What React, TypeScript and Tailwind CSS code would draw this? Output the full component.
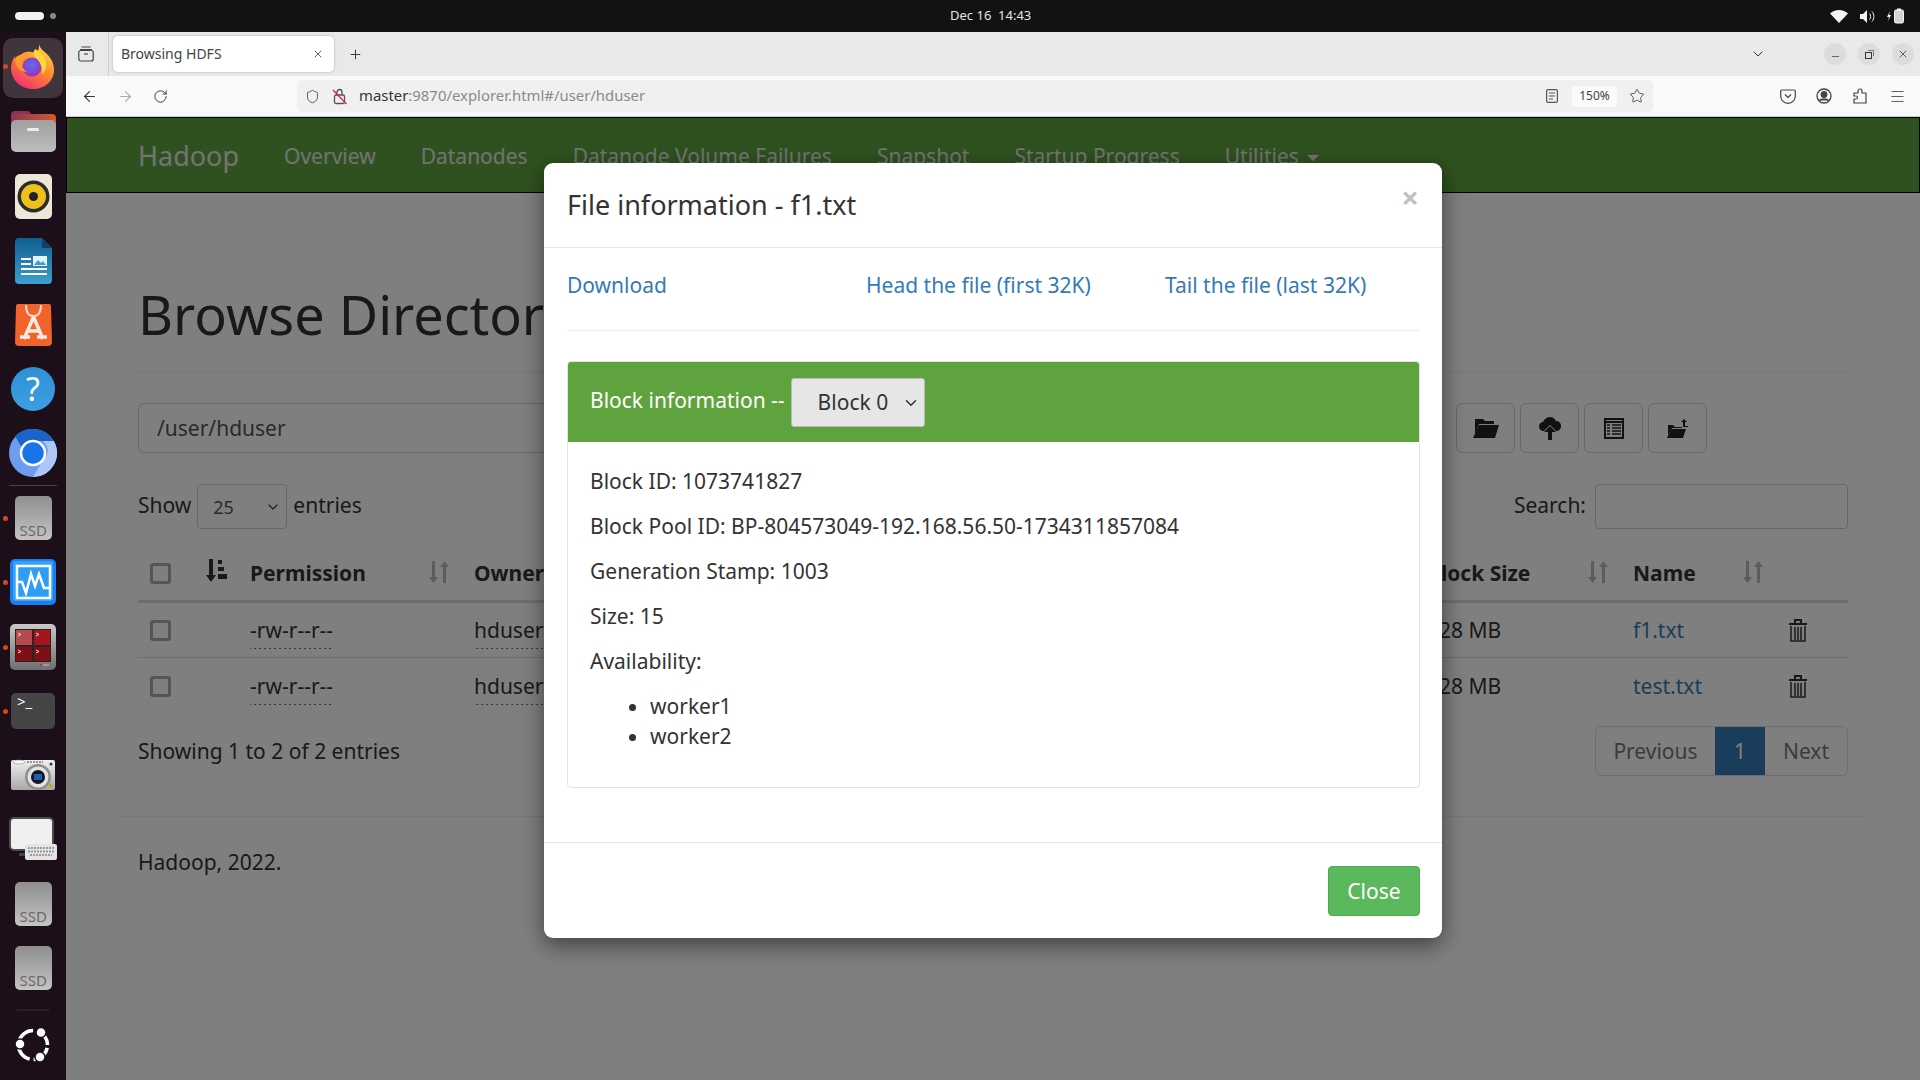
import { ArrowLeft, ArrowRight, ChevronDown, Menu, Minus, Plus, RotateCw, Shield, Star, X } from "lucide-react";

const fontFamily = "font-['Noto_Sans','Open_Sans',sans-serif]";

function SsdIcon() {
  return (
    <div className="relative h-[44px] w-[37px] overflow-hidden rounded-[5px] bg-gradient-to-b from-[#8f8f8f] to-[#c4c4c4]">
      <span className="absolute bottom-[1px] left-[5px] text-[15px] leading-[18px] text-[#6b6b6b]">SSD</span>
    </div>
  );
}

function FirefoxIcon() {
  return (
    <svg width="44" height="46" viewBox="0 0 44 46" className="mb-[4px]">
      <defs>
        <linearGradient id="ffA" x1="0.8" y1="0" x2="0.2" y2="1">
          <stop offset="0" stopColor="#ffe14a" />
          <stop offset="0.45" stopColor="#ff8a2a" />
          <stop offset="1" stopColor="#f0297a" />
        </linearGradient>
        <radialGradient id="ffB" cx="0.5" cy="0.4" r="0.6">
          <stop offset="0" stopColor="#5b6df0" />
          <stop offset="1" stopColor="#9a2fc0" />
        </radialGradient>
      </defs>
      <path d="M28 1c1 5 4 6 8 10 5 5 7 11 7 16 0 11-9 19-21 19S0 37 0 25c0-5 2-9 4-12 0 2 1 4 2 5 1-4 4-8 9-9 4-1 8 1 11 0 2-2 2-5 2-8z" fill="url(#ffA)" />
      <circle cx="21" cy="24" r="9.5" fill="url(#ffB)" />
      <path d="M5 14c3-2 6-3 10-2l6 3c-5-1-9 1-10 4-1 4 1 8 6 10-6 0-11-3-12-8-1-3-1-5 0-7z" fill="#ff9a2e" />
      <path d="M24 6c4 2 10 6 11 14 1 5-1 9-4 12 1-6-1-13-7-18-2-2-2-5 0-8z" fill="#ffd53f" />
    </svg>
  );
}

function FilesIcon() {
  return (
    <div className="relative h-[41px] w-[45px]">
      <div className="absolute left-0 top-0 h-[14px] w-[20px] rounded-t-[4px] bg-[#8a3352]" />
      <div className="absolute left-0 right-0 top-[3px] h-[16px] rounded-t-[4px] bg-gradient-to-r from-[#8a3352] to-[#d25c1f]" />
      <div className="absolute inset-x-0 bottom-0 top-[9px] rounded-[5px] bg-gradient-to-b from-[#a0a0a0] to-[#bdbdbd]" />
      <div className="absolute left-[16px] top-[17px] h-[3px] w-[12px] rounded-sm bg-[#eee]" />
    </div>
  );
}

function RhythmboxIcon() {
  return (
    <svg width="37" height="45" viewBox="0 0 37 45">
      <rect width="37" height="45" rx="5" fill="#ece7d8" />
      <circle cx="18.5" cy="22.5" r="16" fill="#2b2b2b" />
      <circle cx="18.5" cy="22.5" r="12.5" fill="#eec11a" />
      <circle cx="18.5" cy="22.5" r="4.5" fill="#222" />
    </svg>
  );
}

function WriterIcon() {
  return (
    <svg width="37" height="46" viewBox="0 0 37 46">
      <defs>
        <linearGradient id="wr" x1="0" y1="0" x2="0" y2="1">
          <stop offset="0" stopColor="#115d8f" />
          <stop offset="1" stopColor="#3ca0cf" />
        </linearGradient>
      </defs>
      <path d="M4 0h23l10 10v32a4 4 0 0 1-4 4H4a4 4 0 0 1-4-4V4a4 4 0 0 1 4-4z" fill="url(#wr)" />
      <path d="M27 0l10 10h-10z" fill="#0c4468" />
      <path d="M6 20h10v2H6zM6 25h10v2H6zM6 30h26v2H6zM6 35h26v2H6z" fill="#fff" />
      <rect x="18" y="18" width="14" height="10" fill="#e5f2f9" />
      <path d="M19 27l4-5 3 3 2-2 3 4z" fill="#3ca0cf" />
    </svg>
  );
}

function AppCenterIcon() {
  return (
    <svg width="37" height="42" viewBox="0 0 37 42">
      <path d="M3 0h31a2 2 0 0 1 2 2l1 36a4 4 0 0 1-4 4H4a4 4 0 0 1-4-4L1 2a2 2 0 0 1 2-2z" fill="#f0632a" />
      <path d="M11 1c0 8 3 11 7.500 11S26 9 26 1" fill="none" stroke="#f8dccf" strokeWidth="2" />
      <path d="M18.500 13L9 35M18.500 13L28 35M12 27h13M5 33h10M22 33h10" fill="none" stroke="#fbe9e0" strokeWidth="3.500" />
    </svg>
  );
}

function HelpIcon() {
  return (
    <div className="flex h-[44px] w-[44px] items-center justify-center rounded-full bg-gradient-to-b from-[#2f90d8] to-[#3a9fe0] text-[32px] leading-none text-white">
      ?
    </div>
  );
}

function ChromiumIcon() {
  return (
    <svg width="48" height="48" viewBox="0 0 48 48">
      <circle cx="24" cy="24" r="24" fill="#6e9df0" />
      <path d="M24 0a24 24 0 0 1 20.800 12H24a12 12 0 0 0-11 7L6 7a24 24 0 0 1 18-7z" fill="#1c63c9" />
      <path d="M44.800 12A24 24 0 0 1 24 48l10-17a12 12 0 0 0 0-19z" fill="#adc8f8" />
      <circle cx="24" cy="24" r="12" fill="#1a73e8" stroke="#fff" strokeWidth="2.500" />
    </svg>
  );
}

function MonitorIcon() {
  return (
    <svg width="46" height="46" viewBox="0 0 46 46">
      <rect width="46" height="46" rx="5" fill="#1d7cf2" />
      <rect x="3" y="2" width="40" height="40" rx="2" fill="#33a4fb" />
      <rect x="7" y="7" width="33" height="32" fill="#2f9df5" stroke="#fff" strokeWidth="2.500" />
      <path d="M7 23h5l4 11 5-19 4 12 4-12 5 14h6" fill="none" stroke="#fff" strokeWidth="2.500" />
    </svg>
  );
}

function TilixIcon() {
  return (
    <svg width="46" height="46" viewBox="0 0 46 46">
      <defs>
        <linearGradient id="tx" x1="0" y1="0" x2="0" y2="1">
          <stop offset="0" stopColor="#c9c9c9" />
          <stop offset="1" stopColor="#6e6e6e" />
        </linearGradient>
      </defs>
      <rect width="46" height="46" rx="5" fill="url(#tx)" />
      <rect x="5" y="5" width="36" height="33" fill="#2c2222" />
      <rect x="6" y="6" width="16" height="15" fill="#b64a50" />
      <rect x="24" y="6" width="16" height="15" fill="#a3161d" />
      <rect x="6" y="23" width="16" height="14" fill="#7e0f14" />
      <rect x="24" y="23" width="16" height="14" fill="#7e0f14" />
      <path d="M8 9l3 1.500-3 1.500M26 9l3 1.500-3 1.500M8 26l3 1.500-3 1.500M26 26l3 1.500-3 1.500" fill="none" stroke="#fff" strokeWidth="0.800" />
      <rect x="30" y="40" width="2" height="2" fill="#e02020" />
      <rect x="33" y="40" width="6" height="2" fill="#999" />
    </svg>
  );
}

function TerminalIcon() {
  return (
    <div className="h-[36px] w-[44px] rounded-[5px] bg-[#454545] pl-[6px] text-[15px] leading-[16px] text-white">&gt;_</div>
  );
}

function CameraIcon() {
  return (
    <svg width="44" height="32" viewBox="0 0 44 32">
      <defs>
        <linearGradient id="cam" x1="0" y1="0" x2="0" y2="1">
          <stop offset="0" stopColor="#f0f0f0" />
          <stop offset="1" stopColor="#a8a8a8" />
        </linearGradient>
      </defs>
      <rect y="1" width="44" height="30" rx="2" fill="url(#cam)" />
      <ellipse cx="8" cy="3" rx="6" ry="2" fill="#f8f8f8" stroke="#777" strokeWidth="0.500" />
      <path d="M16 3h16" stroke="#444" strokeWidth="1" strokeDasharray="2 1" />
      <circle cx="27" cy="18" r="13" fill="#8f8f8f" />
      <circle cx="27" cy="18" r="10.500" fill="#e4e4e4" />
      <circle cx="27" cy="18" r="7" fill="#101820" />
      <rect x="23" y="15" width="8" height="6" fill="#1a5fb0" />
      <circle cx="40" cy="5" r="1.500" fill="#333" />
      <rect x="38" y="25" width="3" height="3" fill="#e09a1c" />
    </svg>
  );
}

function KeyboardIcon() {
  return (
    <svg width="48" height="44" viewBox="0 0 48 44">
      <rect x="1" y="1" width="43" height="32" rx="4" fill="#f0f0f0" stroke="#4c4c4c" strokeWidth="2" />
      <rect x="10" y="36" width="14" height="3" fill="#444" />
      <rect x="16" y="27" width="32" height="16" rx="2" fill="#e4e4e4" />
      <path d="M19 31h26M19 34.500h26M21 38h22" stroke="#9a9a9a" strokeWidth="2" strokeDasharray="2 1" />
    </svg>
  );
}

function UbuntuIcon() {
  return (
    <svg width="36" height="36" viewBox="0 0 36 36">
      <circle cx="18" cy="18" r="14.500" fill="none" stroke="#fff" strokeWidth="3.500" strokeDasharray="19 4" strokeDashoffset="-3" />
      <circle cx="26" cy="5.500" r="5" fill="#fff" stroke="#1c0f1a" strokeWidth="1.500" />
      <circle cx="5" cy="17" r="5" fill="#fff" stroke="#1c0f1a" strokeWidth="1.500" />
      <circle cx="25" cy="30" r="5" fill="#fff" stroke="#1c0f1a" strokeWidth="1.500" />
    </svg>
  );
}

const dockTop = [
  { key: "writer", icon: <WriterIcon /> },
  { key: "appcenter", icon: <AppCenterIcon /> },
  { key: "help", icon: <HelpIcon /> },
  { key: "chromium", icon: <ChromiumIcon /> },
];

const dockBottom = [
  { key: "ssd1", icon: <SsdIcon />, running: true },
  { key: "monitor", icon: <MonitorIcon />, running: true },
  { key: "tilix", icon: <TilixIcon />, running: true },
  { key: "terminal", icon: <TerminalIcon />, running: true },
  { key: "camera", icon: <CameraIcon />, running: false },
  { key: "keyboard", icon: <KeyboardIcon />, running: false },
  { key: "ssd2", icon: <SsdIcon />, running: false },
  { key: "ssd3", icon: <SsdIcon />, running: false },
];

function Dock() {
  return (
    <div className="flex w-[66px] shrink-0 flex-col items-center bg-[#1c0f1a] pt-[6px]">
      <div className="relative flex h-[60px] w-[60px] items-center justify-center rounded-[10px] bg-[#40343d]">
        <span className="absolute left-[0px] top-[26px] h-[5px] w-[5px] rounded-full bg-[#d5491a]" />
        <FirefoxIcon />
      </div>
      <div className="mt-[1px] flex h-[64px] items-center justify-center">
        <FilesIcon />
      </div>
      <div className="flex h-[66px] items-center justify-center">
        <RhythmboxIcon />
      </div>
      {dockTop.map((d) => (
        <div key={d.key} className="flex h-[64px] items-center justify-center">
          {d.icon}
        </div>
      ))}
      <div className="h-px w-[48px] bg-[#4a3f48]" />
      {dockBottom.map((d) => (
        <div key={d.key} className="relative flex h-[64.250px] w-full items-center justify-center">
          {d.running && <span className="absolute left-[3px] top-[30px] h-[5px] w-[5px] rounded-full bg-[#d5491a]" />}
          {d.icon}
        </div>
      ))}
      <div className="mt-[9px] h-[2px] w-[34px] rounded-t bg-[#2a1d28]" />
      <div className="mt-[16px]">
        <UbuntuIcon />
      </div>
    </div>
  );
}

function TopBar() {
  return (
    <div className="relative flex h-[32px] shrink-0 items-center justify-between bg-[#121212] pl-[15px] pr-[16px] text-[#e4e4e4]">
      <div className="flex items-center gap-[6px]">
        <div className="h-[8px] w-[29px] rounded-full bg-[#f2f2f2]" />
        <div className="h-[6px] w-[6px] rounded-full bg-[#8a8a8a]" />
      </div>
      <div className="absolute left-[950px] top-[6px] whitespace-pre text-[13px] leading-[18px]">Dec 16  14:43</div>
      <div className="flex items-center gap-[12px]">
        <svg width="18" height="13" viewBox="0 0 18 13" fill="#f5f5f5">
          <path d="M0 3.500C2.500 1.500 5.500 0 9 0s6.500 1.500 9 3.500L9 13z" />
        </svg>
        <svg width="15" height="13" viewBox="0 0 15 13" fill="none">
          <path d="M0 4h3l4-4v13l-4-4H0z" fill="#f5f5f5" />
          <path d="M9.500 3.500c1.500 1.500 1.500 4.500 0 6M12 1.500c2.500 3 2.500 7 0 10" stroke="#f5f5f5" strokeWidth="1" />
        </svg>
        <svg width="17" height="16" viewBox="0 0 17 16" fill="none">
          <path d="M3 3L0 9h2l-1 4 3-6H2z" fill="#f5f5f5" />
          <rect x="7.500" y="2" width="9" height="13" rx="1.500" stroke="#f5f5f5" fill="#f5f5f5" fillOpacity="0.85" />
          <rect x="10" y="0.500" width="4" height="2" fill="#f5f5f5" />
        </svg>
      </div>
    </div>
  );
}

function WindowButton({ children }: { children: React.ReactNode }) {
  return <div className="flex h-[22px] w-[22px] items-center justify-center rounded-full bg-[#dcdcdc] text-[#333]">{children}</div>;
}

function BrowserChrome() {
  return (
    <div className="shrink-0 text-[#333]">
      <div className="flex h-[44px] items-center bg-[#e9e9e9]">
        <div className="flex h-full w-[43px] items-center justify-center border-r border-[#cfcfcf] pr-[2px]">
          <svg width="16" height="16" viewBox="0 0 16 16" fill="none" stroke="#444" strokeWidth="1.200">
            <path d="M3.500 1h9M2 3.500h12" />
            <rect x="0.800" y="4.500" width="14.400" height="10.500" rx="2" />
            <path d="M6 8h4" />
          </svg>
        </div>
        <div className="ml-[4px] flex h-[36px] w-[221px] items-center justify-between rounded-[5px] bg-white pl-[8px] pr-[10px] shadow-[0_0_3px_rgba(0,0,0,0.25)]">
          <span className="mb-[1px] text-[14px] text-[#444]">Browsing HDFS</span>
          <X size={12} strokeWidth={1.5} />
        </div>
        <Plus size={15} strokeWidth={1.5} className="ml-[14px]" />
        <div className="ml-auto flex items-center pr-[6px]">
          <ChevronDown size={16} strokeWidth={1.5} className="mr-[58px]" />
          <div className="flex gap-[12px]">
            <WindowButton>
              <Minus size={11} strokeWidth={1.5} className="mt-[4px]" />
            </WindowButton>
            <WindowButton>
              <svg width="9" height="9" viewBox="0 0 9 9" fill="none" stroke="#333">
                <rect x="0.500" y="2.500" width="6" height="6" />
                <path d="M3 0.500h5.500V6" strokeOpacity="0.6" />
              </svg>
            </WindowButton>
            <WindowButton>
              <X size={12} strokeWidth={1.5} />
            </WindowButton>
          </div>
        </div>
      </div>
      <div className="flex h-[41px] items-start border-b border-[#cdcdcd] bg-[#f9f9f9] pt-[4px]">
        <div className="flex h-[32px] w-[231px] items-center gap-[19px] pl-[15px]">
          <ArrowLeft size={17} strokeWidth={1.5} />
          <ArrowRight size={17} strokeWidth={1.5} className="text-[#aaa]" />
          <RotateCw size={15} strokeWidth={1.5} />
        </div>
        <div className="flex h-[32px] w-[1356px] items-center rounded-[5px] bg-[#f0f0f0] pl-[8px]">
          <Shield size={15} strokeWidth={1.5} className="text-[#555]" />
          <svg width="16" height="17" viewBox="0 0 16 17" fill="none" className="ml-[12px]" stroke="#555" strokeWidth="1.300">
            <rect x="2.500" y="7" width="10" height="8.500" rx="1.500" />
            <path d="M5 7V4a2.500 2.500 0 0 1 5 0v3" />
            <path d="M1 2l13.500 14" stroke="#e3204f" />
          </svg>
          <span className="mb-[1px] ml-[11px] text-[14.900px] text-[#333]">
            master<span className="text-[#8a8a8a]">:9870/explorer.html#/user/hduser</span>
          </span>
          <svg width="12" height="14" viewBox="0 0 12 14" fill="none" stroke="#555" strokeWidth="1.200" className="ml-auto">
            <rect x="0.600" y="0.600" width="10.800" height="12.800" rx="1.500" />
            <path d="M3 4h6M3 7h6M3 10h4" />
          </svg>
          <div className="ml-[14px] flex h-[21px] w-[45px] items-center justify-center rounded-[3px] bg-[#fafafa] text-[12px] text-[#444]">150%</div>
          <Star size={16} strokeWidth={1.3} className="ml-[12px] mr-[8px] text-[#444]" />
        </div>
        <div className="ml-[127px] flex h-[32px] items-center gap-[20px] text-[#444]">
          <svg width="16" height="15" viewBox="0 0 16 15" fill="none" stroke="#444" strokeWidth="1.200">
            <path d="M2 1h12a1.300 1.300 0 0 1 1.300 1.300V7a7.300 7.300 0 0 1-14.600 0V2.300A1.300 1.300 0 0 1 2 1z" />
            <path d="M5 5.500l3 3 3-3" />
          </svg>
          <svg width="16" height="16" viewBox="0 0 16 16" fill="none" stroke="#444" strokeWidth="1.300">
            <circle cx="8" cy="8" r="7" />
            <circle cx="8" cy="6.500" r="2.800" fill="#444" />
            <path d="M3.500 12.500c1-2 8-2 9 0" fill="#444" />
          </svg>
          <svg width="16" height="16" viewBox="0 0 16 16" fill="none" stroke="#444" strokeWidth="1.200" className="ml-[1px]">
            <path d="M1 15V11h2a1.500 1.500 0 0 0 0-3H1V5h4V3a2 2 0 0 1 4 0v2h4v10z" />
          </svg>
          <Menu size={17} strokeWidth={1.2} />
        </div>
      </div>
    </div>
  );
}

function SortIcon({ active = false }: { active?: boolean }) {
  if (active) {
    return (
      <svg width="22" height="24" viewBox="0 0 22 24" fill="#333">
        <path d="M3 0h4v16h3l-5 7-5-7h3z" />
        <path d="M12 1h4v4h-4zM12 8h6v4h-6zM12 15h9v5h-9z" />
      </svg>
    );
  }
  return (
    <svg width="20" height="22" viewBox="0 0 20 22" fill="#333" fillOpacity="0.35">
      <path d="M3 0h3v16h3l-4.500 6L0 16h3z" />
      <path d="M15.500 0L20 6h-3v16h-3V6h-3z" />
    </svg>
  );
}

function TrashIcon() {
  return (
    <svg width="18" height="23" viewBox="0 0 18 23" fill="none" stroke="#333" strokeWidth="2" className="ml-[1px]">
      <path d="M0 5h18M6 4V1h6v3" />
      <path d="M2 7v15h14V7M6 8v13M9 8v13M12 8v13" strokeWidth="1.500" />
    </svg>
  );
}

function ToolButton({ children }: { children: React.ReactNode }) {
  return (
    <button type="button" className="flex h-[50px] w-[59px] items-center justify-center rounded-[6px] border border-[#ccc] bg-white">
      {children}
    </button>
  );
}

// dotted line under the permission / owner / group cells, wider gaps than border-dotted
const dottedLink =
  "bg-[linear-gradient(90deg,#337ab7_40%,transparent_40%)] bg-[length:5px_1px] bg-bottom bg-repeat-x pb-[5px]";

function TableRow({ name, last }: { name: string; last?: boolean }) {
  const cell = `px-[12px] align-middle ${last ? "h-[57px] pt-[1px]" : "h-[56px] border-b border-[#ddd] pt-[1px]"}`;
  return (
    <tr>
      <td className={cell}>
        <input type="checkbox" className="block h-[21px] w-[21px] appearance-none rounded-[3px] border-[3px] border-[#aaaab2] bg-white" />
      </td>
      <td className={cell}>
        <span className={dottedLink}>-rw-r--r--</span>
      </td>
      <td className={cell}>
        <span className={dottedLink}>hduser</span>
      </td>
      <td className={cell}>
        <span className={dottedLink}>supergroup</span>
      </td>
      <td className={cell}>15 B</td>
      <td className={cell}>Dec 16 14:40</td>
      <td className={cell}>
        <span className={dottedLink}>3</span>
      </td>
      <td className={cell}>128 MB</td>
      <td className={cell}>
        <a href="#" className="text-[#337ab7]">
          {name}
        </a>
      </td>
      <td className={cell}>
        <TrashIcon />
      </td>
    </tr>
  );
}

const columns = [
  { label: "Permission", w: "w-[224px]" },
  { label: "Owner", w: "w-[150px]" },
  { label: "Group", w: "w-[150px]" },
  { label: "Size", w: "w-[130px]" },
  { label: "Last Modified", w: "w-[263px]" },
  { label: "Replication", w: "w-[260px]" },
  { label: "Block Size", w: "w-[206px]" },
  { label: "Name", w: "w-[155px]" },
];

function HadoopPage() {
  const navItems = ["Overview", "Datanodes", "Datanode Volume Failures", "Snapshot", "Startup Progress"];
  return (
    <div className="bg-white text-[21px] leading-[30px] text-[#333]">
      <nav className="flex h-[76px] items-center gap-[45px] border border-black bg-[#5fa33e] pl-[71px] pt-[2px] text-[#e6e6e6]">
        <a href="#" className="text-[27px]">
          Hadoop
        </a>
        {navItems.map((item) => (
          <a key={item} href="#" className="whitespace-nowrap">
            {item}
          </a>
        ))}
        <a href="#" className="flex items-center gap-[8px]">
          Utilities
          <span className="mt-[3px] h-0 w-0 border-x-[6px] border-t-[6px] border-x-transparent border-t-[#e6e6e6]" />
        </a>
      </nav>

      <div className="px-[72px]">
        <h1 className="mt-[92px] text-[54px] leading-[59px]">Browse Directory</h1>
        <div className="mt-[28px] h-px bg-[#eee]" />

        <div className="mt-[30px] flex items-center justify-between">
          <input readOnly value="/user/hduser" className="h-[50px] w-[1290px] rounded-[6px] border border-[#ccc] px-[18px] text-[#555] outline-none" />
          <div className="mr-[141px] flex gap-[5px]">
            <ToolButton>
              <svg width="26" height="20" viewBox="0 0 26 20" fill="#222">
                <path d="M2 1h8l2 2h9v3H6L2 17z" />
                <path d="M6 7h20l-4 13H0z" />
              </svg>
            </ToolButton>
            <ToolButton>
              <svg width="22" height="23" viewBox="0 0 22 23" fill="#222">
                <path d="M11 0c3 0 5 2 6 4 3 0 5 2 5 5s-2 5-5 5H5c-3 0-5-2-5-5 0-2 2-4 4-4 1-3 4-5 7-5z" />
                <path d="M11 9l6 6h-4v8H9v-8H5z" stroke="#fff" strokeWidth="1.500" paintOrder="stroke" />
              </svg>
            </ToolButton>
            <ToolButton>
              <svg width="20" height="21" viewBox="0 0 20 21" fill="none" stroke="#222">
                <rect x="1" y="1" width="18" height="19" strokeWidth="2" />
                <path d="M1 4h18" strokeWidth="2" />
                <path d="M3 7h3M8 7h9M3 10h3M8 10h9M3 13h3M8 13h9M3 16h3M8 16h9" strokeWidth="1.500" />
              </svg>
            </ToolButton>
            <ToolButton>
              <svg width="22" height="19" viewBox="0 0 22 19" fill="#222">
                <path d="M1 6h5l2 2h7v1H5L1 16z" />
                <path d="M4 10h15l-3 9H0z" />
                <path d="M17 0l3 3h-2v4h3v1h-5V3h-2z" />
              </svg>
            </ToolButton>
          </div>
        </div>

        <div className="mt-[31px] flex h-[45px] items-center justify-between">
          <div className="flex items-center gap-[6px]">
            <span className="mb-[4px]">Show</span>
            <div className="relative">
              <select className="h-[45px] w-[90px] appearance-none rounded-[4px] border border-[#ccc] bg-white pl-[15px] text-[18px] text-[#555]">
                <option>25</option>
              </select>
              <ChevronDown size={16} className="absolute right-[6px] top-[15px] text-[#444]" />
            </div>
            <span className="mb-[4px]">entries</span>
          </div>
          <div className="flex items-center gap-[9px]">
            <span className="mb-[4px]">Search:</span>
            <input className="h-[45px] w-[253px] rounded-[4px] border border-[#ccc]" />
          </div>
        </div>

        <table className="mt-[12px] w-[1710px] table-fixed border-collapse">
          <colgroup>
            <col className="w-[100px]" />
            {columns.map((c) => (
              <col key={c.label} className={c.w} />
            ))}
            <col className="w-[72px]" />
          </colgroup>
          <thead>
            <tr className="border-b-[3px] border-[#ddd]">
              <th className="h-[60px] pl-[12px] pr-[10px] pt-[6px]">
                <div className="flex items-center justify-between">
                  <input type="checkbox" className="block h-[21px] w-[21px] appearance-none rounded-[3px] border-[3px] border-[#aaaab2] bg-white" />
                  <span className="mb-[4px]">
                    <SortIcon active />
                  </span>
                </div>
              </th>
              {columns.map((c) => (
                <th key={c.label} className="h-[60px] pl-[12px] pr-[13px] pt-[6px] text-left font-bold">
                  <div className="flex items-center justify-between">
                    <span className="whitespace-nowrap">{c.label}</span>
                    <span className="mb-[2px]">
                      <SortIcon />
                    </span>
                  </div>
                </th>
              ))}
              <th />
            </tr>
          </thead>
          <tbody>
            <TableRow name="f1.txt" />
            <TableRow name="test.txt" last />
          </tbody>
        </table>

        <div className="mt-[12px] flex h-[50px] items-center justify-between">
          <span>Showing 1 to 2 of 2 entries</span>
          <div className="flex h-[50px] overflow-hidden rounded-[6px] border border-[#ddd] text-[#777]">
            <span className="flex w-[119px] items-center justify-center">Previous</span>
            <span className="flex w-[50px] items-center justify-center bg-[#337ab7] text-white">1</span>
            <span className="flex w-[82px] items-center justify-center">Next</span>
          </div>
        </div>

        <div className="-mx-[20px] mt-[40px] h-px bg-[#eee]" />
        <p className="mt-[30px] pb-[200px]">Hadoop, 2022.</p>
      </div>
    </div>
  );
}

function FileInfoModal() {
  return (
    <div className="absolute left-[478px] top-[46px] w-[898px] rounded-[9px] bg-white text-[21px] leading-[30px] text-[#333] shadow-[0_7px_22px_rgba(0,0,0,0.5)]">
      <div className="relative flex h-[85px] items-center border-b border-[#e5e5e5] pl-[23px]">
        <h4 className="text-[27px] leading-[30px]">File information - f1.txt</h4>
        <span className="absolute right-[23px] top-[24px] text-[31px] font-bold leading-[20px] text-[#c0c0c0]">×</span>
      </div>

      <div className="pl-[23px] pr-[22px]">
        <div className="grid h-[83px] grid-cols-[299px_299px_1fr] items-start border-b border-[#eee] pt-[22px]">
          <a href="#" className="text-[#337ab7]">
            Download
          </a>
          <a href="#" className="text-[#337ab7]">
            Head the file (first 32K)
          </a>
          <a href="#" className="text-[#337ab7]">
            Tail the file (last 32K)
          </a>
        </div>

        <div className="mt-[30px] overflow-hidden rounded-[4px] border border-[#e4e4e4]">
          <div className="flex h-[80px] items-center bg-[#5fa33e] pl-[22px] text-white">
            <span className="mb-[4px]">Block information --</span>
            <div className="relative ml-[6px]">
              <select className="block h-[49px] w-[134px] appearance-none rounded-[3px] border border-[#bbb] bg-[#e6e6e6] pl-[26px] text-[#333]">
                <option>Block 0</option>
              </select>
              <ChevronDown size={18} strokeWidth={2} className="absolute right-[5px] top-[16px] text-[#333]" />
            </div>
          </div>
          <div className="px-[22px] pb-[36px] pt-[24px]">
            <p className="mb-[15px]">Block ID: 1073741827</p>
            <p className="mb-[15px]">Block Pool ID: BP-804573049-192.168.56.50-1734311857084</p>
            <p className="mb-[15px]">Generation Stamp: 1003</p>
            <p className="mb-[15px]">Size: 15</p>
            <p className="mb-[15px]">Availability:</p>
            <ul className="list-disc pl-[60px]">
              <li>worker1</li>
              <li>worker2</li>
            </ul>
          </div>
        </div>
      </div>

      <div className="mt-[54px] flex h-[96px] items-center justify-end border-t border-[#e5e5e5] pr-[22px]">
        <button type="button" className="h-[50px] w-[92px] rounded-[4px] border border-[#4cae4c] bg-[#5cb85c] text-white">
          Close
        </button>
      </div>
    </div>
  );
}

export default function App() {
  return (
    <div className={`flex h-screen w-screen flex-col overflow-hidden ${fontFamily}`}>
      <TopBar />
      <div className="flex min-h-0 flex-1">
        <Dock />
        <div className="flex min-w-0 flex-1 flex-col">
          <BrowserChrome />
          <div className="relative min-h-0 flex-1 overflow-hidden">
            <HadoopPage />
            <div className="absolute inset-0 bg-black/50" />
            <FileInfoModal />
          </div>
        </div>
      </div>
    </div>
  );
}
